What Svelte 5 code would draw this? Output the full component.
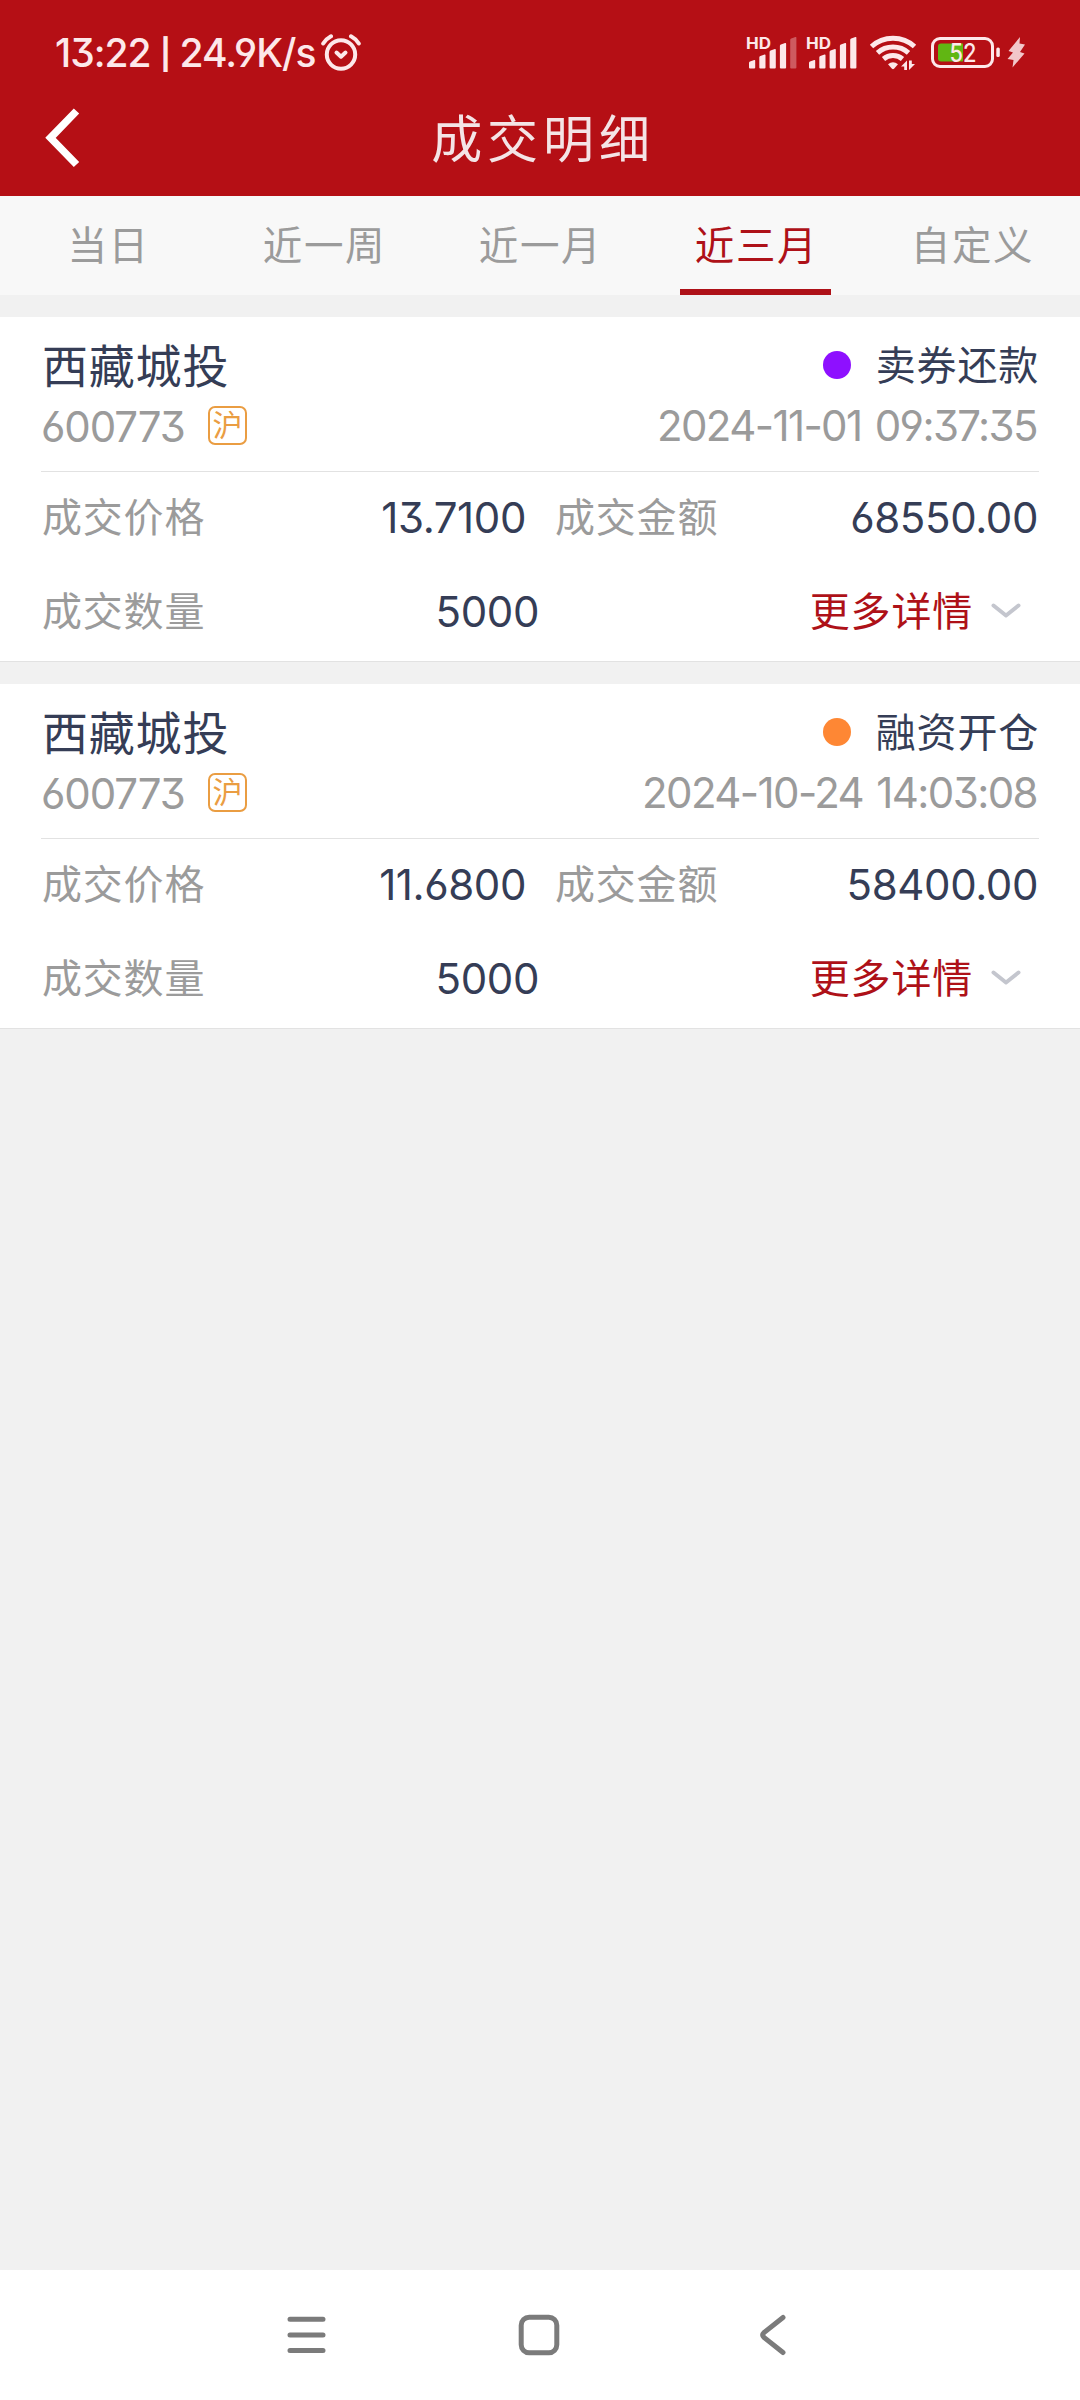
<script>
  const tabs = ['当日', '近一周', '近一月', '近三月', '自定义'];
  let active = $state(3);

  const deals = [
    {
      name: '西藏城投', code: '600773', market: '沪',
      type: '卖券还款', color: '#8e10ff', time: '2024-11-01 09:37:35',
      price: '13.7100', amount: '68550.00', volume: '5000'
    },
    {
      name: '西藏城投', code: '600773', market: '沪',
      type: '融资开仓', color: '#fe8734', time: '2024-10-24 14:03:08',
      price: '11.6800', amount: '58400.00', volume: '5000'
    }
  ];

  const BARS = [8, 13.5, 19, 25, 31];
</script>

{#snippet signal(level)}
  <svg class="signal" width="52" height="34" viewBox="0 0 52 34">
    <text x="-1" y="12.5" textLength="25" lengthAdjust="spacingAndGlyphs">HD</text>
    {#each BARS as h, i}
      <path
        d="M{2 + i * 10.3} {32.5 - h + 2.5} q0 -1 1 -1.4 l4.2 -1.6 q1 -0.3 1 0.8 V31.5 q0 1 -1 1 h-4.2 q-1 0 -1 -1z"
        opacity={i < level ? 1 : 0.35}
      />
    {/each}
  </svg>
{/snippet}

<div class="page">
  <header>
    <div class="status">
      <span class="clock">13:22 <span class="sep">|</span> 24.9K/s</span>
      <svg class="alarm" width="40" height="38" viewBox="0 0 40 38">
        <circle cx="20" cy="20.5" r="14.2" stroke-width="4" />
        <path d="M2.2 9.5 Q5 5 10 2.3 M37.8 9.5 Q35 5 30 2.3" stroke-width="4" />
        <path d="M15.5 18.5 l4.5 4.2 l4.5 -4.2" stroke-width="4" />
      </svg>
      <div class="tray">
        {@render signal(4)}
        {@render signal(5)}
        <svg class="wifi" width="48" height="36" viewBox="0 0 48 36">
          <path d="M2.5 11.5 Q11.5 3.2 24 3.2 T45.5 11.5" />
          <path d="M8.5 17.8 Q15 12 24 12 T39.5 17.8" />
          <path d="M14.5 24 Q18.5 20.6 24 20.6 T33.5 24" />
          <path class="fill" d="M19 29.2 Q24 25.5 29 29.2 L25 33.8 Q24 34.6 23 33.8z" />
          <path class="fill" d="M38 25.5 V35 H35.2 V31.5 H32z M40 35 V25.5 H42.8 V29 H46z" />
        </svg>
        <svg class="battery" width="70" height="32" viewBox="0 0 70 32">
          <rect x="1.5" y="1.5" width="60" height="28" rx="7.5" fill="none" stroke="#fde8ea" stroke-width="3" />
          <path d="M10 6.5 H32 V24.5 H10 Q7 24.5 7 21.5 V9.5 Q7 6.5 10 6.500z" fill="#61b613" />
          <rect x="65.3" y="10.5" width="3.5" height="9.5" rx="1.5" />
          <text x="18.5" y="24.5" textLength="27" lengthAdjust="spacingAndGlyphs">52</text>
        </svg>
        <svg class="bolt" width="18" height="31" viewBox="0 0 18 31">
          <path d="M13 0 L1.5 14 L6 15.5 L0.5 22 L6.5 23 L5.5 30.5 L17.5 16.5 L13 15 L18 7.5 L12.5 6.5z" />
        </svg>
      </div>
    </div>
    <div class="titlebar">
      <svg class="back" width="36" height="60" viewBox="0 0 36 60">
        <path d="M31.5 3 L5.5 29.8 L31.5 56.5" />
      </svg>
      <h1>成交明细</h1>
    </div>
  </header>

  <nav class="tabs">
    {#each tabs as tab, i}
      <button class:active={i === active} onclick={() => (active = i)}><span>{tab}</span></button>
    {/each}
  </nav>

  <main>
    {#each deals as d}
      <section class="card">
        <div class="head">
          <div class="line">
            <span class="name">{d.name}</span>
            <i class="dot" style="background:{d.color}"></i>
            <span class="type">{d.type}</span>
          </div>
          <div class="line sub">
            <span class="code">{d.code}</span>
            <span class="market">{d.market}</span>
            <span class="time">{d.time}</span>
          </div>
        </div>
        <div class="row">
          <span class="label">成交价格</span>
          <span class="value price">{d.price}</span>
          <span class="label second">成交金额</span>
          <span class="value amount">{d.amount}</span>
        </div>
        <div class="row">
          <span class="label">成交数量</span>
          <span class="value volume">{d.volume}</span>
          <span class="more">更多详情</span>
          <svg class="chevron" width="30" height="16" viewBox="0 0 30 16"><path d="M2.5 2.5 L15 12.5 L27.5 2.5" /></svg>
        </div>
      </section>
    {/each}
  </main>

  <footer>
    <svg width="40" height="42" viewBox="0 0 40 42"><path d="M4 5.3 H37 M4 21 H37 M4 36.5 H37" /></svg>
    <svg width="42" height="42" viewBox="0 0 42 42"><rect x="3.2" y="3.2" width="35.6" height="35.6" rx="8" /></svg>
    <svg width="28" height="42" viewBox="0 0 28 42"><path d="M24 3.5 L5 18.5 Q2.5 21 5 23.5 L24 38.5" /></svg>
  </footer>
</div>

<style>
  :global(body) { margin: 0; background: #f1f1f1; }

  .page {
    width: 1080px;
    height: 2400px;
    display: flex;
    flex-direction: column;
    background: #f1f1f1;
    font-family: Inter, "Noto Sans CJK SC", sans-serif;
    font-feature-settings: "cv03", "cv04", "cv09", "calt" 0;
    color: #353d56;
    overflow: hidden;
  }
  svg { display: block; flex-shrink: 0; }

  header { height: 196px; background: #b50f15; color: #fde8ea; }
  .status {
    height: 105px;
    display: flex;
    align-items: center;
    padding: 0 55px;
  }
  .clock { width: 266px; font-size: 39px; line-height: 48px; font-weight: 500; white-space: pre; letter-spacing: -1px; }
  .sep { font-size: 30px; vertical-align: 2px; line-height: 1; font-weight: 700; }
  .alarm { fill: none; stroke: #fde8ea; stroke-linecap: round; stroke-linejoin: round; }
  .tray { margin-left: auto; display: flex; align-items: center; fill: #fde8ea; }
  .signal { margin-right: 8px; overflow: visible; }
  .signal text { font-size: 16px; font-weight: 700; }
  .wifi { margin-left: 2px; fill: none; stroke: #fde8ea; stroke-width: 5; }
  .wifi .fill { fill: #fde8ea; stroke: none; }
  .battery { margin-left: 14px; }
  .battery text { font-size: 25px; font-weight: 500; }
  .bolt { margin-left: 6px; opacity: 0.85; }

  .titlebar { position: relative; height: 65px; display: flex; align-items: center; justify-content: center; }
  .back { position: absolute; left: 45px; top: 3px; fill: none; stroke: #fff; stroke-width: 7.5; }
  h1 {
    margin: 0;
    padding: 4px 0 0 6px;
    font-size: 51px;
    font-weight: 400;
    line-height: 65px;
    letter-spacing: 4.9px;
    color: #f4e4e6;
  }

  .tabs { height: 99px; display: flex; background: #f8f8f8; }
  .tabs button {
    flex: 1;
    display: flex;
    justify-content: center;
    border: 0;
    padding: 0 1px 0 0;
    background: none;
    font: inherit;
    font-size: 39.5px;
    line-height: 101px;
    letter-spacing: 1.6px;
    color: #9b9b9b;
  }
  .tabs span {
    box-sizing: border-box;
    width: 151px;
    height: 99px;
    padding-left: 2px;
    text-align: center;
    white-space: nowrap;
  }
  .tabs .active { color: #ae1118; }
  .tabs .active span { border-bottom: 6px solid #ae1118; }

  .card {
    box-sizing: border-box;
    height: 345px;
    margin-top: 22px;
    padding: 0 41px;
    background: #fff;
    border-bottom: 1px solid #e2e2e2;
  }
  .head { box-sizing: border-box; height: 155px; padding-top: 17px; border-bottom: 1px solid #e2e2e2; }
  .line { height: 62px; display: flex; align-items: center; }
  .name { padding: 0 0 5px 1px; font-size: 46px; letter-spacing: 0.8px; }
  .type { padding-bottom: 4px; font-size: 40px; letter-spacing: 0.8px; }
  .dot { width: 28px; height: 28px; margin-left: auto; margin-right: 25px; border-radius: 50%; }
  .sub { height: 60px; color: #9b9b9b; font-size: 42px; }
  .code { width: 167px; letter-spacing: -1.1px; }
  .market {
    box-sizing: border-box;
    width: 39px;
    height: 39px;
    margin-bottom: 1px;
    border: 2px solid #ea9d42;
    border-radius: 7px;
    color: #ea9d42;
    font-size: 30px;
    line-height: 35px;
    text-align: center;
  }
  .time { margin-left: auto; padding: 0 2px 1px 0; letter-spacing: -1.6px; word-spacing: 3px; }

  .row { height: 94px; display: flex; align-items: center; white-space: nowrap; }
  .label { width: 199px; padding: 0 0 9px 1px; font-size: 40px; letter-spacing: 0.8px; color: #9b9b9b; }
  .second { margin-left: 28px; }
  .value { padding-bottom: 4px; font-size: 42px; text-align: right; letter-spacing: -0.4px; }
  .price { width: 285px; }
  .amount { margin-left: auto; padding-right: 1px; }
  .volume { width: 298px; }
  .more {
    margin-left: auto;
    padding-bottom: 9px;
    font-size: 40px;
    letter-spacing: 0.8px;
    color: #ae1118;
  }
  .chevron {
    margin: 0 18px 4px;
    fill: none;
    stroke: #c4c6ce;
    stroke-width: 4;
    stroke-linecap: round;
    stroke-linejoin: round;
  }

  footer {
    box-sizing: border-box;
    height: 130px;
    margin-top: auto;
    padding: 0 293px 0 286px;
    display: flex;
    align-items: center;
    justify-content: space-between;
    background: #fff;
  }
  footer svg { fill: none; stroke: #7b7b7b; stroke-width: 5; stroke-linecap: round; }
  footer svg:nth-child(2) { margin-right: 7px; }
</style>
